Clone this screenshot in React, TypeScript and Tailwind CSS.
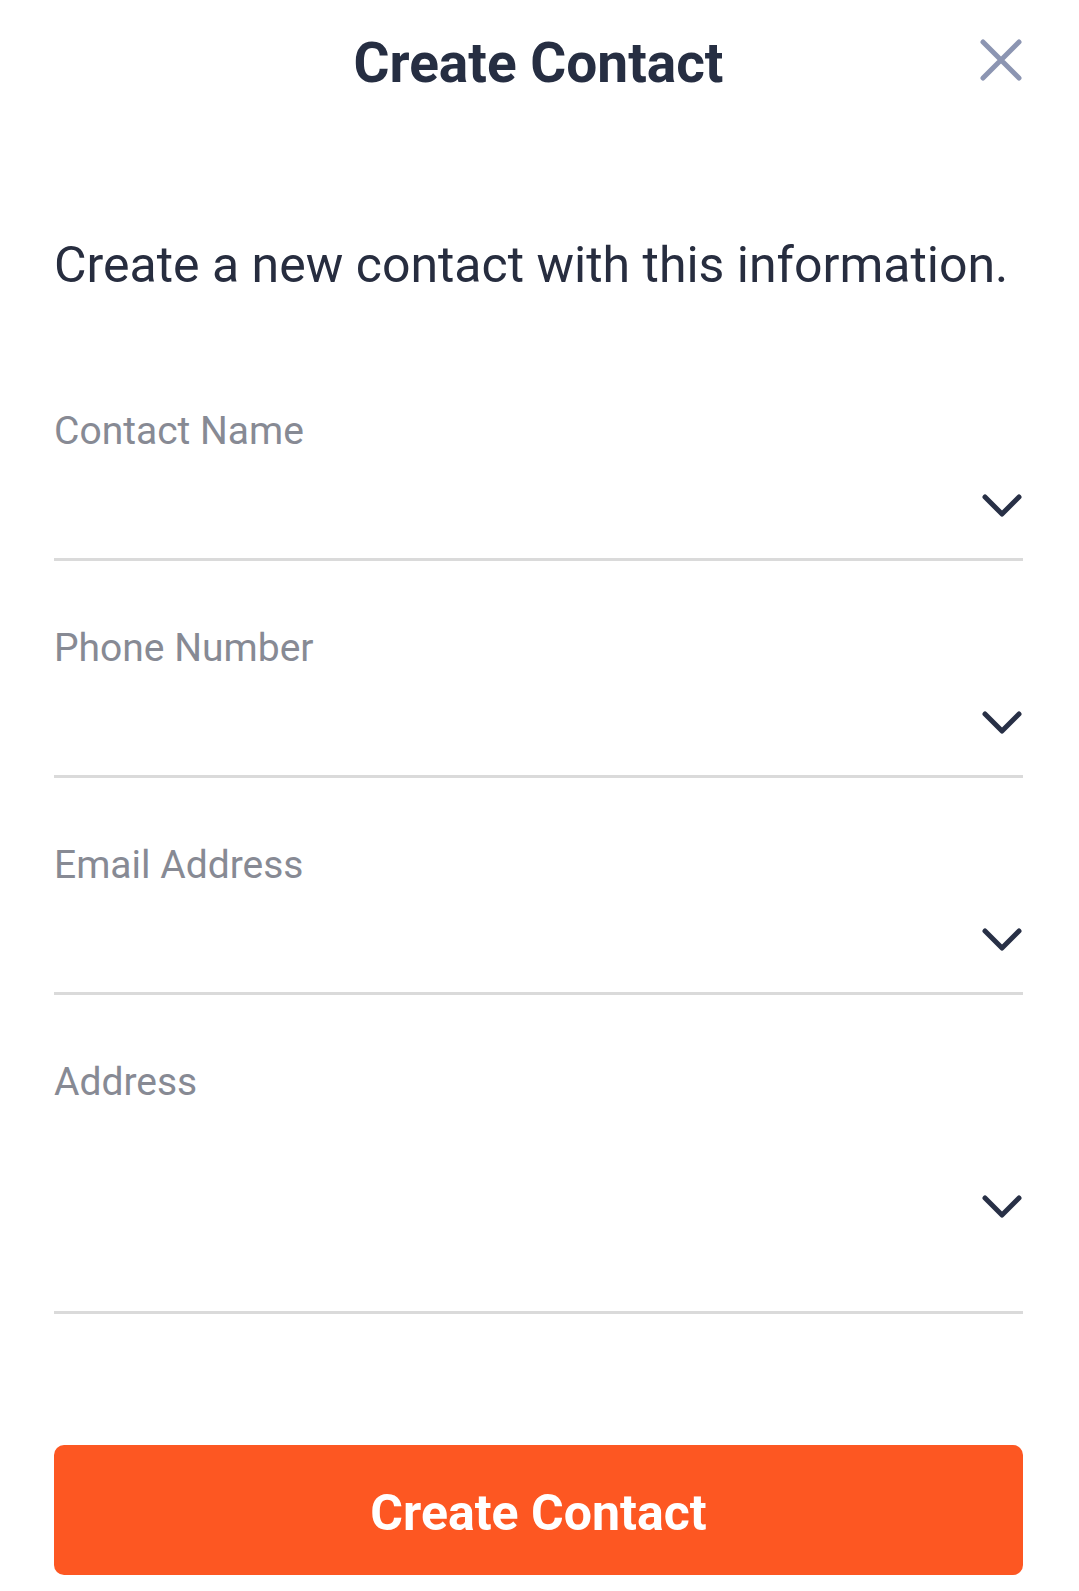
import React from "react";

const fields = [
  { label: "Contact Name", tall: false },
  { label: "Phone Number", tall: false },
  { label: "Email Address", tall: false },
  { label: "Address", tall: true },
];

const CloseIcon = () => (
  <svg width="42" height="42" viewBox="0 0 42 42" fill="none">
    <path
      d="M3 3L39 39M39 3L3 39"
      stroke="#8c95b2"
      strokeWidth="5"
      strokeLinecap="round"
    />
  </svg>
);

const ChevronDown = () => (
  <svg width="42" height="27" viewBox="0 0 42 27" fill="none">
    <path
      d="M4 5L21 22L38 5"
      stroke="#283046"
      strokeWidth="5"
      strokeLinecap="round"
      strokeLinejoin="round"
    />
  </svg>
);

const Field = ({ label, tall }: { label: string; tall: boolean }) => {
  return (
    <div className="flex flex-col border-b-[3px] border-[#dadada] pt-[64px]">
      <div className="h-[46px] text-[39px] leading-[46px] text-[#878a94]">
        {label}
      </div>
      <div
        className={`${
          tall ? "mt-[88px] pb-[91px]" : "mt-[38px] pb-[39px]"
        } flex flex-row justify-end`}
      >
        <div className="h-[27px]">
          <ChevronDown />
        </div>
      </div>
    </div>
  );
};

export default function App() {
  return (
    <div
      className="flex min-h-[1591px] w-full flex-col bg-white pl-[54px] pr-[56px]"
      style={{ fontFamily: "Roboto, 'Noto Sans', sans-serif" }}
    >
      <div className="relative mt-[31px] flex h-[64px] flex-row items-center justify-center">
        <h1 className="text-[55px] font-bold leading-[64px] text-[#262e42]">
          Create Contact
        </h1>
        <button className="absolute right-[1px] top-[8px] flex items-center justify-center">
          <CloseIcon />
        </button>
      </div>

      <p className="mt-[140px] text-[50px] leading-[60px] text-[#272d3f]">
        Create a new contact with this information.
      </p>

      <div className="mt-[49px] flex flex-col">
        {fields.map((f) => (
          <Field key={f.label} label={f.label} tall={f.tall} />
        ))}
      </div>

      <button className="mt-[131px] flex h-[130px] w-full items-center justify-center rounded-[10px] bg-[#fd5722] pt-[5px] text-[50px] font-bold leading-none text-white">
        Create Contact
      </button>
    </div>
  );
}
